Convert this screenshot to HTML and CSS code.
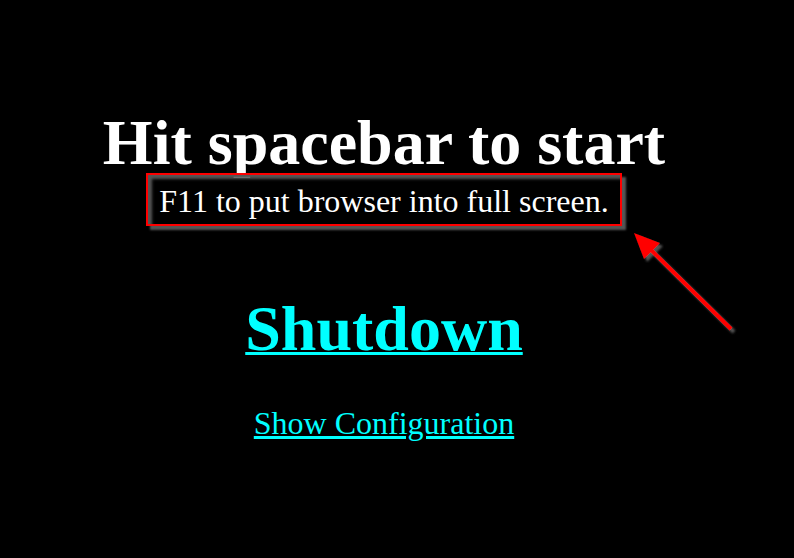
FILE: index.html
```html
<!DOCTYPE html>
<html>
<head>
<meta charset="utf-8">
<link rel="stylesheet" href="styles.css">
</head>
<body>
<div class="page">
  <h1 class="title">Hit spacebar to start</h1>
  <div class="hint-row"><span class="hint">F11 to put browser into full screen.</span></div>
  <p class="shutdown"><a href="#">Shutdown</a></p>
  <p class="config"><a href="#">Show Configuration</a></p>
</div>
<svg class="arrow" width="794" height="558" viewBox="0 0 794 558">
  <defs>
    <filter id="sh" x="-20%" y="-20%" width="140%" height="140%">
      <feDropShadow dx="3" dy="3" stdDeviation="1" flood-color="#555" flood-opacity="1"/>
    </filter>
  </defs>
  <g filter="url(#sh)">
    <line x1="731" y1="329" x2="646" y2="245" stroke="#ff0000" stroke-width="4"/>
    <polygon points="634,233 660,243 644,259" fill="#ff0000"/>
  </g>
</svg>
</body>
</html>
```
FILE: styles.css
```css
html, body {
  margin: 0;
  padding: 0;
  background: #000;
}
body {
  font-family: "Liberation Serif", "Times New Roman", serif;
  color: #fff;
  width: 794px;
  height: 558px;
  overflow: hidden;
  position: relative;
}
.page {
  width: 768px;
  text-align: center;
  padding-top: 108px;
}
.title {
  font-size: 64px;
  font-weight: bold;
  line-height: 70px;
  margin: 0;
}
.hint-row {
  margin-top: -5px;
}
.hint {
  display: inline-block;
  font-size: 32px;
  line-height: 40px;
  padding: 6px 11px 3px 11px;
  border: 2px solid #ff0000;
  box-shadow: 4px 4px 2px #555, inset 4px 4px 3px #555;
}
.shutdown {
  margin: 68px 0 0 0;
  font-size: 64px;
  font-weight: bold;
  line-height: 70px;
}
.shutdown a {
  text-decoration-thickness: 3px;
}
.config {
  margin: 41px 0 0 0;
  font-size: 32px;
  line-height: 36px;
}
a {
  color: #00ffff;
}
.arrow {
  position: absolute;
  left: 0;
  top: 0;
}
```
